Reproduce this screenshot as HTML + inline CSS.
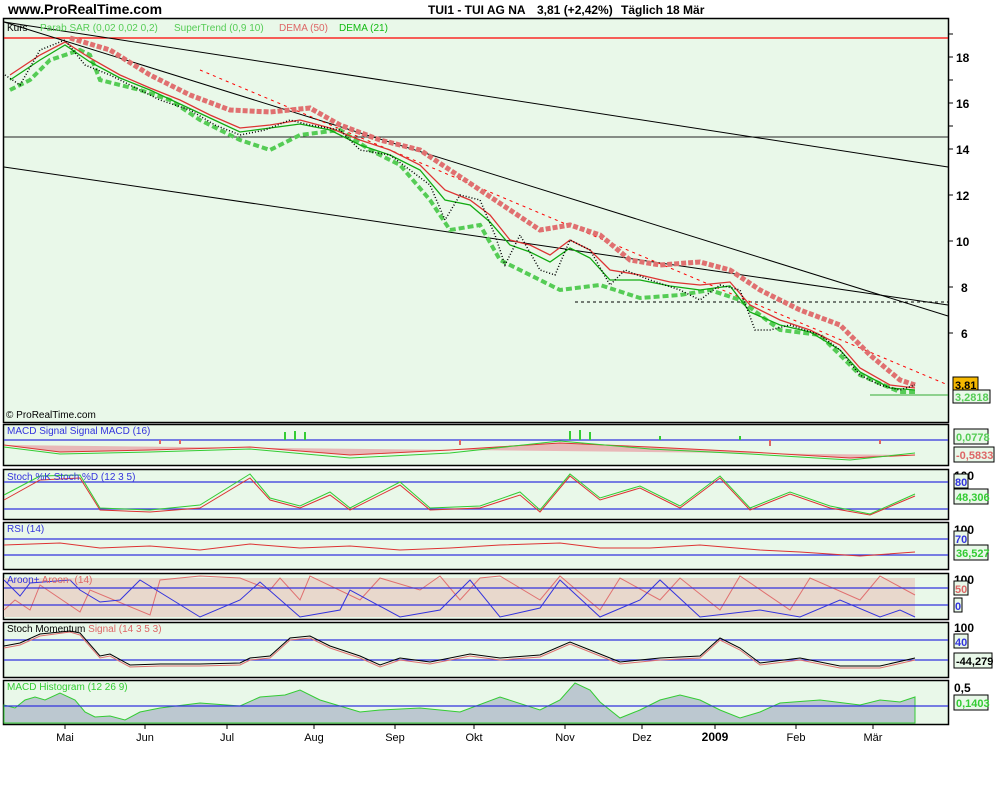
<!DOCTYPE html>
<html><head><meta charset="utf-8"><style>
body{margin:0;background:#fff;width:1000px;height:800px;overflow:hidden;font-family:"Liberation Sans",sans-serif}
svg text{font-family:"Liberation Sans",sans-serif}
</style></head><body>
<svg width="1000" height="800" xmlns="http://www.w3.org/2000/svg">
<text x="8" y="14" font-size="14" font-weight="bold">www.ProRealTime.com</text>
<text x="428" y="14" font-size="12" font-weight="bold">TUI1 - TUI AG NA</text>
<text x="537" y="14" font-size="12" font-weight="bold">3,81 (+2,42%)</text>
<text x="621" y="14" font-size="12" font-weight="bold">Täglich  18 Mär</text>
<g fill="#e9f8e9" stroke="#000" stroke-width="1.5">
<rect x="3.5" y="18.5" width="945" height="404"/>
<rect x="3.5" y="424.5" width="945" height="41"/>
<rect x="3.5" y="469.5" width="945" height="50"/>
<rect x="3.5" y="522.5" width="945" height="47"/>
<rect x="3.5" y="573.5" width="945" height="46"/>
<rect x="3.5" y="622.5" width="945" height="55"/>
<rect x="3.5" y="680.5" width="945" height="44"/>
</g>
<g font-size="12" font-weight="bold">
<text x="956" y="62">18</text><text x="956" y="108">16</text><text x="956" y="154">14</text><text x="956" y="200">12</text><text x="956" y="246">10</text><text x="961" y="292">8</text><text x="961" y="338">6</text>
</g>
<g stroke="#000"><line x1="949" y1="34" x2="953" y2="34"/><line x1="949" y1="57" x2="953" y2="57"/><line x1="949" y1="80" x2="953" y2="80"/><line x1="949" y1="103" x2="953" y2="103"/><line x1="949" y1="126" x2="953" y2="126"/><line x1="949" y1="149" x2="953" y2="149"/><line x1="949" y1="195" x2="953" y2="195"/><line x1="949" y1="241" x2="953" y2="241"/><line x1="949" y1="287" x2="953" y2="287"/><line x1="949" y1="333" x2="953" y2="333"/></g>
<line x1="4" y1="38" x2="948" y2="38" stroke="red" stroke-width="1.3"/>
<line x1="4" y1="137" x2="948" y2="137" stroke="#222" stroke-width="1"/>
<line x1="4" y1="22" x2="948" y2="167" stroke="#000"/>
<line x1="4" y1="22" x2="948" y2="316" stroke="#000"/>
<line x1="4" y1="167" x2="948" y2="305" stroke="#000"/>
<line x1="575" y1="302" x2="948" y2="302" stroke="#000" stroke-dasharray="3,3"/>
<line x1="200" y1="70" x2="948" y2="385" stroke="red" stroke-dasharray="3,4"/>
<line x1="870" y1="395" x2="948" y2="395" stroke="#3a3"/>
<text x="7" y="31" font-size="10">Kurs</text>
<text x="40" y="31" font-size="10" fill="#5c5">Parab SAR (0,02 0,02 0,2)</text>
<text x="174" y="31" font-size="10" fill="#5c5">SuperTrend (0,9 10)</text>
<text x="279" y="31" font-size="10" fill="#d66">DEMA (50)</text>
<text x="339" y="31" font-size="10" fill="#1b1">DEMA (21)</text>
<polyline fill="none" stroke="#e07070" stroke-width="5" stroke-dasharray="5,2" points="70,38 110,50 150,75 190,95 230,110 270,112 310,108 340,125 380,140 420,150 450,170 480,190 510,210 540,230 570,225 600,235 630,260 660,265 700,262 730,270 760,290 800,310 840,325 870,355 900,380 915,385"/>
<polyline fill="none" stroke="#5c5" stroke-width="4" stroke-dasharray="6,3" points="10,90 30,80 50,60 80,50 90,55 100,80 140,90 170,100 200,120 240,140 270,150 300,135 340,130 370,150 400,165 430,200 450,230 480,225 500,260 540,280 560,290 600,285 640,298 680,295 710,290 740,300 780,330 820,335 860,375 900,392 915,392"/>
<polyline fill="none" stroke="#d33" stroke-width="1.3" points="10,75 40,55 65,42 90,58 120,75 150,88 180,100 210,115 240,128 270,125 300,120 330,128 360,140 390,150 420,165 445,190 470,200 490,215 510,240 530,245 550,255 570,240 590,250 610,270 640,275 670,282 700,285 730,282 750,305 780,320 810,330 840,345 860,368 890,385 915,388"/>
<polyline fill="none" stroke="#1a1" stroke-width="1.3" points="10,80 40,60 65,45 90,62 120,78 150,90 180,104 210,118 240,132 270,128 300,124 330,130 360,145 390,155 420,170 445,200 470,205 490,222 510,245 530,252 550,262 570,248 590,258 610,280 640,280 670,286 700,290 730,286 750,312 780,325 810,332 840,350 860,372 890,388 915,390"/>
<polyline fill="none" stroke="#000" stroke-width="1.5" stroke-dasharray="1,2" points="5,75 20,85 40,50 65,40 85,65 110,75 130,85 160,100 190,110 215,125 240,135 265,130 290,120 310,125 340,130 360,150 390,155 410,170 430,185 445,220 460,195 480,200 495,235 505,265 520,235 540,270 555,275 570,240 590,250 610,285 625,270 650,280 680,290 700,300 720,285 740,290 755,330 770,330 790,325 820,335 840,350 860,375 880,385 900,390 915,385"/>
<text x="6" y="418" font-size="10">© ProRealTime.com</text>
<rect x="953" y="377" width="25" height="15" fill="#f5b800" stroke="#000"/>
<text x="955" y="389" font-size="11" font-weight="bold">3,81</text>
<rect x="953" y="390" width="37" height="13" fill="#e9f8e9" stroke="#000"/>
<text x="955" y="401" font-size="11" font-weight="bold" fill="#5c5">3,2818</text>
<line x1="4" y1="440" x2="948" y2="440" stroke="#33d" stroke-width="1.3"/>
<polyline fill="#e8b8b8" stroke="#d33" points="4,445 60,452 150,450 250,447 350,455 450,450 560,443 650,447 750,452 850,458 915,455"/>
<polyline fill="none" stroke="#3c3" points="4,447 60,454 150,452 250,449 350,458 450,453 560,441 650,449 750,454 850,460 915,453"/>
<g stroke="#3c3" stroke-width="2"><line x1="285" y1="440" x2="285" y2="432"/><line x1="295" y1="440" x2="295" y2="431"/><line x1="305" y1="440" x2="305" y2="432"/><line x1="570" y1="440" x2="570" y2="431"/><line x1="580" y1="440" x2="580" y2="430"/><line x1="590" y1="440" x2="590" y2="432"/><line x1="660" y1="440" x2="660" y2="436"/><line x1="740" y1="440" x2="740" y2="436"/></g>
<g stroke="#d66" stroke-width="2"><line x1="160" y1="440" x2="160" y2="444"/><line x1="180" y1="440" x2="180" y2="444"/><line x1="460" y1="440" x2="460" y2="445"/><line x1="770" y1="440" x2="770" y2="446"/><line x1="880" y1="440" x2="880" y2="444"/></g>
<text x="7" y="434" font-size="10" fill="#33d">MACD Signal Signal MACD (16)</text>
<rect x="954" y="429" width="34" height="15" fill="#e9f8e9" stroke="#000"/><text x="956" y="441" font-size="11" font-weight="bold" fill="#5c5">0,0778</text>
<rect x="954" y="447" width="40" height="15" fill="#e9f8e9" stroke="#000"/><text x="956" y="459" font-size="11" font-weight="bold" fill="#d66">-0,5833</text>
<line x1="4" y1="482" x2="948" y2="482" stroke="#33d" stroke-width="1.3"/>
<line x1="4" y1="509" x2="948" y2="509" stroke="#33d" stroke-width="1.3"/>
<polyline fill="none" stroke="#d33" points="4,500 40,480 80,478 100,510 150,512 200,508 250,478 270,500 300,508 330,495 350,510 400,485 430,510 480,508 520,495 540,512 570,476 600,500 640,488 680,508 720,478 750,510 790,494 830,508 870,515 915,496"/>
<polyline fill="none" stroke="#3c3" points="4,495 40,476 80,475 100,508 150,510 200,505 250,474 270,498 300,506 330,492 350,508 400,482 430,508 480,506 520,492 540,510 570,474 600,498 640,486 680,506 720,476 750,508 790,492 830,506 870,514 915,494"/>
<text x="7" y="480" font-size="10" fill="#33d">Stoch %K Stoch %D (12 3 5)</text>
<text x="954" y="480" font-size="12" font-weight="bold">100</text>
<rect x="954" y="474" width="14" height="14" fill="#e9f8e9" stroke="#000"/><text x="955" y="486" font-size="11" font-weight="bold" fill="#33d">80</text>
<rect x="954" y="489" width="34" height="15" fill="#e9f8e9" stroke="#000"/><text x="956" y="501" font-size="11" font-weight="bold" fill="#3c3">48,306</text>
<line x1="4" y1="539" x2="948" y2="539" stroke="#33d" stroke-width="1.3"/>
<line x1="4" y1="555" x2="948" y2="555" stroke="#33d" stroke-width="1.3"/>
<polyline fill="none" stroke="#d33" points="4,545 60,543 100,548 150,546 200,550 250,544 300,548 350,546 400,550 450,548 500,545 560,543 600,548 650,548 700,545 760,550 800,552 860,556 915,552"/>
<text x="7" y="532" font-size="10" fill="#33d">RSI (14)</text>
<text x="954" y="534" font-size="12" font-weight="bold">100</text>
<rect x="954" y="531" width="14" height="14" fill="#e9f8e9" stroke="#000"/><text x="955" y="543" font-size="11" font-weight="bold" fill="#33d">70</text>
<rect x="954" y="545" width="34" height="15" fill="#e9f8e9" stroke="#000"/><text x="956" y="557" font-size="11" font-weight="bold" fill="#3c3">36,527</text>
<polygon fill="#e8d8cc" points="4,578 915,578 915,617 4,617"/>
<polyline fill="none" stroke="#e07070" points="4,610 15,600 30,610 40,585 80,612 90,590 150,615 160,580 200,576 240,578 270,590 280,578 300,600 310,576 360,600 380,578 420,590 440,576 460,600 480,578 500,576 540,600 560,576 600,610 620,578 660,600 680,578 720,610 740,576 790,610 810,578 860,600 880,576 915,595"/>
<polyline fill="none" stroke="#33d" points="4,580 20,596 30,583 70,580 80,590 100,602 120,600 140,580 200,617 240,600 260,582 300,617 340,610 350,590 400,617 440,610 470,580 500,617 540,608 560,580 600,617 640,600 660,580 700,617 760,610 800,617 840,600 880,617 900,610 915,617"/>
<line x1="4" y1="588" x2="948" y2="588" stroke="#33d" stroke-width="1.3"/>
<line x1="4" y1="605" x2="948" y2="605" stroke="#33d" stroke-width="1.3"/>
<text x="7" y="583" font-size="10" fill="#33d">Aroon+ <tspan fill="#d66">Aroon- (14)</tspan></text>
<text x="954" y="584" font-size="12" font-weight="bold">100</text>
<rect x="954" y="581" width="14" height="14" fill="#e9f8e9" stroke="#000"/><text x="955" y="593" font-size="11" font-weight="bold" fill="#d66">50</text>
<rect x="954" y="598" width="8" height="14" fill="#e9f8e9" stroke="#000"/><text x="955" y="610" font-size="11" font-weight="bold" fill="#33d">0</text>
<line x1="4" y1="640" x2="948" y2="640" stroke="#33d" stroke-width="1.3"/>
<line x1="4" y1="660" x2="948" y2="660" stroke="#33d" stroke-width="1.3"/>
<polyline fill="none" stroke="#e07070" points="4,648 20,645 40,636 70,632 80,635 100,658 110,656 130,667 160,666 200,666 240,665 250,660 270,658 290,640 310,638 330,648 360,658 380,667 400,660 430,664 470,656 500,660 540,657 570,644 590,652 620,664 660,660 700,658 720,640 740,650 760,665 800,660 840,668 880,668 915,660"/>
<polyline fill="none" stroke="#000" points="4,646 20,643 40,634 70,631 80,633 100,656 110,654 130,665 160,664 200,664 240,663 250,658 270,656 290,638 310,636 330,646 360,656 380,665 400,658 430,662 470,654 500,658 540,655 570,642 590,650 620,662 660,658 700,656 720,638 740,648 760,663 800,658 840,666 880,666 915,658"/>
<text x="7" y="632" font-size="10">Stoch Momentum <tspan fill="#d66">Signal (14 3 5 3)</tspan></text>
<text x="954" y="632" font-size="12" font-weight="bold">100</text>
<rect x="954" y="634" width="14" height="14" fill="#e9f8e9" stroke="#000"/><text x="955" y="646" font-size="11" font-weight="bold" fill="#33d">40</text>
<rect x="954" y="653" width="38" height="15" fill="#e9f8e9" stroke="#000"/><text x="956" y="665" font-size="11" font-weight="bold">-44,279</text>
<polygon fill="#bcc8d0" stroke="#3c3" points="4,705 15,708 25,700 35,697 45,700 60,693 75,700 85,712 95,717 110,716 125,720 140,712 160,708 200,703 240,706 260,697 285,695 300,690 320,700 340,706 360,712 380,710 420,708 460,712 500,697 540,710 560,700 575,683 590,690 600,702 620,718 640,710 660,700 680,695 700,700 720,710 740,718 760,712 780,703 820,700 860,705 880,700 900,702 915,697 915,723 4,723"/>
<line x1="4" y1="706" x2="948" y2="706" stroke="#33d" stroke-width="1.3"/>
<text x="7" y="690" font-size="10" fill="#3c3">MACD Histogram (12 26 9)</text>
<text x="954" y="692" font-size="12" font-weight="bold">0,5</text>
<rect x="954" y="695" width="34" height="15" fill="#e9f8e9" stroke="#000"/><text x="956" y="707" font-size="11" font-weight="bold" fill="#3c3">0,1403</text>
<g stroke="#000"><line x1="65" y1="725" x2="65" y2="729"/><line x1="145" y1="725" x2="145" y2="729"/><line x1="227" y1="725" x2="227" y2="729"/><line x1="314" y1="725" x2="314" y2="729"/><line x1="395" y1="725" x2="395" y2="729"/><line x1="474" y1="725" x2="474" y2="729"/><line x1="565" y1="725" x2="565" y2="729"/><line x1="642" y1="725" x2="642" y2="729"/><line x1="715" y1="725" x2="715" y2="729"/><line x1="796" y1="725" x2="796" y2="729"/><line x1="873" y1="725" x2="873" y2="729"/></g>
<g font-size="11" text-anchor="middle">
<text x="65" y="741">Mai</text><text x="145" y="741">Jun</text><text x="227" y="741">Jul</text><text x="314" y="741">Aug</text><text x="395" y="741">Sep</text><text x="474" y="741">Okt</text><text x="565" y="741">Nov</text><text x="642" y="741">Dez</text><text x="715" y="741" font-size="12" font-weight="bold">2009</text><text x="796" y="741">Feb</text><text x="873" y="741">Mär</text>
</g>
</svg>
</body></html>
